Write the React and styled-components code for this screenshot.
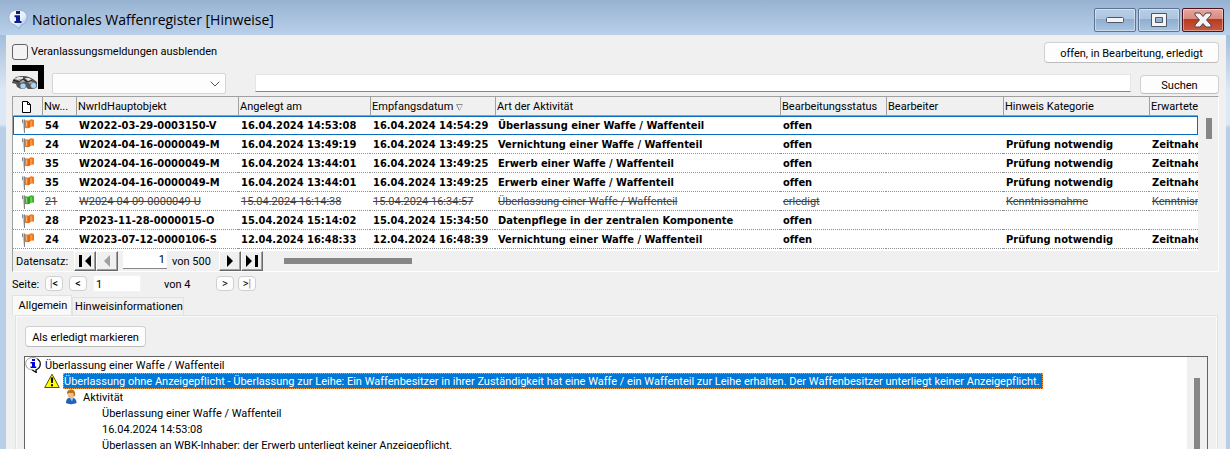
import styled, { createGlobalStyle } from 'styled-components'

const fonts = {
  ui: 'Roboto, "Noto Sans", sans-serif',
  title: '"Open Sans", "Noto Sans", sans-serif',
  bold: '"DejaVu Sans Condensed", "Noto Sans", sans-serif',
}

const GlobalStyle = createGlobalStyle`
  * {
    box-sizing: border-box;
  }

  html, body, #root {
    height: 100%;
  }

  body {
    margin: 0;
    overflow: hidden;
    font: 11px/16px ${fonts.ui};
    font-variant-ligatures: none;
    color: #000;
  }

  button, input, select {
    font: inherit;
    color: inherit;
    margin: 0;
  }
`

const Window = styled.div`
  display: flex;
  flex-direction: column;
  height: 100%;
  background: linear-gradient(#9ab5d3, #9fbad9 30px, #dce8f5 90px, #dce8f5 124px, #b9cfe8 128px);
`

const TitleBar = styled.header`
  display: flex;
  align-items: center;
  height: 35px;
  padding: 4px 6px 0 8px;
  background: linear-gradient(#97b2d1, #b9d0ea);
`

const WindowTitle = styled.h1`
  flex: 1;
  margin: 0 0 0 4px;
  font: 14px/20px ${fonts.title};
  font-variant-ligatures: none;
`

const WindowButtons = styled.div`
  display: flex;
  gap: 2px;
`

const WindowButton = styled.button`
  display: flex;
  align-items: center;
  justify-content: center;
  width: 42px;
  height: 24px;
  padding: 0;
  border: 1px solid ${(props) => (props.$close ? '#4a1420' : '#5d7391')};
  border-radius: 2px;
  box-shadow: inset 0 0 0 1px rgb(255 255 255 / 40%);
  background: ${(props) =>
    props.$close
      ? 'linear-gradient(#e6a79d, #d98a7c 45%, #b8391f 46%, #c75a41)'
      : 'linear-gradient(#b8cee6, #adc5e0 45%, #8fadcf 46%, #a9c4e2)'};
`

const Client = styled.main`
  flex: 1;
  display: flex;
  flex-direction: column;
  min-height: 0;
  margin: 0 4px 0 6px;
  padding: 7px 7px 0 6px;
  background: #f0f0f0;
`

const Toolbar = styled.div`
  display: flex;
  justify-content: space-between;
  height: 23px;
`

const CheckLabel = styled.label`
  display: flex;
  align-items: flex-start;
  gap: 3px;
  line-height: 20px;
`

const CheckBox = styled.input`
  appearance: none;
  width: 16px;
  height: 16px;
  margin-top: 2px;
  border: 1px solid #626262;
  border-radius: 3px;
  background: #f3f3f3;
`

const Button = styled.button`
  width: ${(props) => props.$width};
  height: ${(props) => props.$height || '21px'};
  padding: 2px 0 0;
  border: 1px solid #d0d0d0;
  border-bottom-color: #bcbcbc;
  border-radius: 4px;
  background: #fdfdfd;
  line-height: 16px;
`

const SearchRow = styled.div`
  display: flex;
  align-items: flex-end;
  height: 29px;
  margin-bottom: 2px;
`

const SearchIcon = styled.span`
  display: block;
  align-self: flex-start;
  height: 24px;
  margin-right: 8px;
`

const ComboBox = styled.span`
  display: flex;
  align-items: center;
  width: 174px;
  height: 21px;
  margin-right: 29px;
  padding-right: 5px;
  border: 1px solid #d6d6d6;
  border-radius: 2px;
  background: #fdfdfd;
`

const Select = styled.select`
  flex: 1;
  height: 19px;
  border: 0;
  appearance: none;
  background: none;
`

const SearchInput = styled.input`
  flex: 1;
  min-width: 0;
  height: 18px;
  margin: 0 9px 2px 0;
  border: 1px solid #e5e5e5;
  border-bottom-color: #868686;
  background: #fff;
`

const Grid = styled.section`
  border: 1px solid #fff;
  border-top-color: #a0a0a0;
  border-left-color: #a0a0a0;
`

const GridBody = styled.div`
  display: flex;
  height: 154px;
`

const TableArea = styled.div`
  flex: 1;
  min-width: 0;
  overflow: hidden;
  background: #fff;
`

const Table = styled.table`
  width: 100%;
  table-layout: fixed;
  border-collapse: separate;
  border-spacing: 0;
`

const HeadCell = styled.th`
  height: 19px;
  padding: 2px 0 0 ${(props) => (props.$first ? '8px' : '1px')};
  overflow: hidden;
  border-bottom: 1px solid #a0a0a0;
  border-left: 1px solid ${(props) => (props.$first ? '#f0f0f0' : '#a0a0a0')};
  background: #f0f0f0;
  font-weight: normal;
  line-height: 16px;
  text-align: left;
  white-space: nowrap;

  svg {
    vertical-align: middle;
  }
`

const Row = styled.tr`
  color: ${(props) => (props.$done ? '#444' : '#000')};
  font-family: ${(props) => (props.$done ? fonts.ui : fonts.bold)};
  font-weight: ${(props) => (props.$done ? 'normal' : 'bold')};
  text-decoration: ${(props) => (props.$done ? 'line-through' : 'none')};
  outline: ${(props) => (props.$selected ? '1px solid #0a6cc0' : 'none')};
  outline-offset: -1px;
`

const Cell = styled.td`
  height: 19px;
  padding: 1px 0 0 3px;
  overflow: hidden;
  border-bottom: 1px dotted #909090;
  line-height: 17px;
  white-space: nowrap;

  svg {
    display: block;
    margin-left: 4px;
  }
`

const GridScroll = styled.div`
  width: 20px;
  padding: 21px 0 0 8px;
`

const ScrollThumb = styled.div`
  width: ${(props) => props.$width};
  height: ${(props) => props.$height};
  background: #868686;
`

const Navigator = styled.div`
  display: flex;
  align-items: center;
  height: 20px;
  padding-left: 3px;
`

const NavButton = styled.button`
  display: flex;
  align-items: center;
  justify-content: center;
  width: 22px;
  height: 20px;
  padding: 0;
  border: 1px solid #fff;
  border-right-color: #696969;
  border-bottom-color: #696969;
  box-shadow: inset -1px -1px #a0a0a0;
  background: #f0f0f0;
`

const RecordInput = styled.input`
  width: 44px;
  height: 18px;
  margin: 0 5px 2px;
  padding: 0 2px;
  border: 0;
  border-bottom: 1px solid #868686;
  background: #fff;
  text-align: right;
`

const NavText = styled.span`
  width: ${(props) => props.$width};
  padding-top: 2px;
`

const Pager = styled.div`
  display: flex;
  align-items: center;
  height: 23px;
`

const PageButton = styled.button`
  width: 18px;
  height: 15px;
  margin-right: ${(props) => props.$gap};
  padding: 0;
  border: 1px solid #d0d0d0;
  border-radius: 4px;
  background: #fdfdfd;
  line-height: 12px;
`

const PageMark = styled.span`
  color: ${(props) => props.$color};
`

const PageInput = styled.input`
  width: 48px;
  height: 17px;
  margin-right: 23px;
  padding: 2px 2px 0;
  border: 1px solid #f3f3f3;
  background: #fff;
`

const Tabs = styled.div`
  display: flex;
  align-items: flex-end;
  height: 20px;
`

const Tab = styled.button`
  width: ${(props) => props.$width};
  height: ${(props) => (props.$active ? '20px' : '18px')};
  padding: 0 0 0 2px;
  border: 1px solid #e2e2e2;
  border-bottom: 0;
  background: ${(props) => (props.$active ? '#f9f9f9' : '#f1f1f1')};
  white-space: nowrap;
`

const TabPanel = styled.section`
  flex: 1;
  display: flex;
  flex-direction: column;
  min-height: 0;
  margin: 0 1px 0 3px;
  padding: 10px 9px 0 8px;
  border: 1px solid #e2e2e2;
  border-bottom: 0;
  box-shadow: inset 1px 1px #fafafa, inset -1px 0 #fafafa;
`

const Actions = styled.div`
  display: flex;
  padding-left: 1px;
`

const Tree = styled.div`
  flex: 1;
  display: flex;
  min-height: 0;
  margin-top: 9px;
  border: 1px solid #646464;
  border-bottom: 0;
  background: #fff;
`

const TreeItems = styled.ul`
  flex: 1;
  min-width: 0;
  margin: 0;
  padding: 0;
  overflow: hidden;
  list-style: none;
`

const TreeItem = styled.li`
  display: flex;
  align-items: center;
  height: 16px;
  padding-left: ${(props) => props.$level * 19}px;
  white-space: nowrap;
`

const TreeIcon = styled.span`
  width: 19px;
  height: 16px;
`

const TreeText = styled.span`
  height: 16px;
  line-height: 16px;
  padding-right: 2px;
  border: 1px dotted ${(props) => (props.$selected ? '#ff9a3c' : 'transparent')};
  background: ${(props) => (props.$selected ? '#0078d7' : 'none')};
  color: ${(props) => (props.$selected ? '#fff' : '#000')};
`

const TreeScroll = styled.div`
  width: 20px;
  padding: 21px 0 0 7px;
  background: #f0f0f0;
`

const InfoIcon = () => (
  <svg width='16' height='16' viewBox='0 0 16 16'>
    <path d='M8 .5c4.300 0 7.300 2.500 7.300 6.200 0 3.300-2 5.300-4.300 6l.3 2.800-4-2.600C3 12.500.7 10 .7 6.700.7 3 3.700.5 8 .5z' fill='#fff' stroke='#999' />
    <path d='M12.500 2c2 1.500 2.800 3 2.800 4.700 0 3.300-2 5.300-4.300 6l.3 2.800-4-2.600' fill='none' stroke='#111' strokeWidth='1.200' />
    <path d='M7 2h3v2H7zM5.500 5H10v4.500h1.300V11H5.500V9.500H7v-3H5.500z' fill='#0000d8' />
  </svg>
)

const TitleIcon = () => (
  <svg width='20' height='22' viewBox='0 0 20 22'>
    <defs>
      <linearGradient id='bubble' x1='0' y1='0' x2='1' y2='1'>
        <stop offset='0' stopColor='#fff' />
        <stop offset='.6' stopColor='#e4eefa' />
        <stop offset='1' stopColor='#6f9cd0' />
      </linearGradient>
    </defs>
    <path d='M10 1c5.500 0 9 3 9 7.500 0 4-2.500 6.500-5.500 7.300L11 20l-3.500-4C3.500 15.200 1 12.500 1 8.500 1 4 4.500 1 10 1z' fill='url(#bubble)' stroke='#6f93c2' strokeWidth='.5' />
    <path d='M8 2h4v3H8zM6.500 6.300H12V12h1.500v2h-7v-2H8V8.300H6.500z' fill='#0b1e90' />
  </svg>
)

const WarnIcon = () => (
  <svg width='16' height='16' viewBox='0 0 16 16'>
    <path d='M8 1.200L15.300 14.500H.7z' fill='#ffff00' stroke='#555500' strokeLinejoin='round' />
    <path d='M6.800 4.500h2.400L8.800 10H7.200zM7 11.300h2v2H7z' fill='#000' />
  </svg>
)

const UserIcon = () => (
  <svg width='16' height='16' viewBox='0 0 16 16'>
    <path d='M3 14c0-4 2-5.500 5-5.500s5.500 1.500 5.500 5.500c-3 1.500-8 1.500-10.500 0z' fill='#1f62b8' />
    <path d='M6.500 8.500h4l-1.500 4z' fill='#9cc8f4' />
    <ellipse cx='8' cy='5' rx='3.600' ry='4.300' fill='#f2bd84' />
    <path d='M4 5C3.500 2 6 .3 8.500.5c3 .3 4.300 2.800 3.500 6.500-1 .8-1.500-.5-1.700-3C8 4 5 3.500 4 5z' fill='#b8741e' />
  </svg>
)

const FlagIcon = ({ done }) => (
  <svg width='16' height='16' viewBox='0 0 16 16'>
    <path d='M2 1.500h3V15H4z' fill='#c4c4c4' />
    <path d='M2.500 1.500V5M4.500 1.500V15' stroke='#858585' />
    <path d='M5 2.500c2-1 3 .8 4.500-.5 1.500-1 2.500-.8 4.500 0V9c-2-.8-3-.6-4.500.5C8 11 7 9.500 5 10z' fill={done ? '#3fb52a' : '#f47a20'} />
    <path d='M6.500 3.500v5M11 3v5' stroke={done ? '#8ce06a' : '#ffb066'} />
    <path d='M9 3v7' stroke={done ? '#1f8418' : '#cc5510'} />
  </svg>
)

const PageIcon = () => (
  <svg width='9' height='12' viewBox='0 0 9 12'>
    <path d='M.5.500h5l3 3v8h-8zM5.500.5v3h3' fill='#fff' stroke='#000' />
  </svg>
)

const BinocularsIcon = () => (
  <svg width='32' height='24' viewBox='0 0 32 24'>
    <path d='M0 0h32v24h-6V6H0z' fill='#000' />
    <path d='M1 15l3-3 5-1 4 0 4 1 4 2 4 3 0 5-4 2h-5l-4-4-3 4-4-2-1-3-4-1z' fill='#555' />
    <path d='M2 14l4-2 5 0 0 2-5 1zM13 13l4 0 3 2-4 1z' fill='#e2e2e2' />
    <path d='M6 15l5-1 2 3-5 1zM15 17l4-1 3 2-4 1z' fill='#a5a5a5' />
    <path d='M1 15l6 2 4-3 5 3 4-2' stroke='#222' fill='none' />
    <ellipse cx='11' cy='21' rx='3' ry='2.800' fill='#a8d8f4' stroke='#667' strokeWidth='.6' />
    <ellipse cx='21.500' cy='20.500' rx='3' ry='3' fill='#a8d8f4' stroke='#667' strokeWidth='.6' />
  </svg>
)

const ChevronIcon = () => (
  <svg width='10' height='6' viewBox='0 0 10 6'>
    <path d='M.7.700L5 5 9.300.7' fill='none' stroke='#555' />
  </svg>
)

const ArrowIcon = ({ bar, flip, color = '#000' }) => (
  <svg width='14' height='12' viewBox='0 0 14 12' transform={flip ? 'scale(-1 1)' : undefined}>
    <path d={bar ? 'M1 0l6 6-6 6zM10 0h3v12h-3z' : 'M4 0l6 6-6 6z'} fill={color} />
  </svg>
)

const SortIcon = () => (
  <svg width='7' height='7' viewBox='0 0 7 7'>
    <path d='M6.500.500h-6L3.500 6.500' fill='none' stroke='#8a8a8a' />
    <path d='M3.500 6.500L6.500.5' stroke='#bbb' />
  </svg>
)

const columns = [
  { title: <PageIcon />, width: 29 },
  { title: 'Nw...', width: 34 },
  { title: 'NwrIdHauptobjekt', width: 162 },
  { title: 'Angelegt am', width: 132 },
  { title: <>Empfangsdatum <SortIcon /></>, width: 125 },
  { title: 'Art der Aktivität', width: 285 },
  { title: 'Bearbeitungsstatus', width: 106 },
  { title: 'Bearbeiter', width: 117 },
  { title: 'Hinweis Kategorie', width: 146 },
  { title: 'Erwartete', width: 'auto' },
]

const rows = [
  ['54', 'W2022-03-29-0003150-V', '16.04.2024 14:53:08', '16.04.2024 14:54:29', 'Überlassung einer Waffe / Waffenteil', 'offen', '', '', ''],
  ['24', 'W2024-04-16-0000049-M', '16.04.2024 13:49:19', '16.04.2024 13:49:25', 'Vernichtung einer Waffe / Waffenteil', 'offen', '', 'Prüfung notwendig', 'Zeitnahe'],
  ['35', 'W2024-04-16-0000049-M', '16.04.2024 13:44:01', '16.04.2024 13:49:25', 'Erwerb einer Waffe / Waffenteil', 'offen', '', 'Prüfung notwendig', 'Zeitnahe'],
  ['35', 'W2024-04-16-0000049-M', '16.04.2024 13:44:01', '16.04.2024 13:49:25', 'Erwerb einer Waffe / Waffenteil', 'offen', '', 'Prüfung notwendig', 'Zeitnahe'],
  ['21', 'W2024-04-09-0000049-U', '15.04.2024 16:14:38', '15.04.2024 16:34:57', 'Überlassung einer Waffe / Waffenteil', 'erledigt', '', 'Kenntnissnahme', 'Kenntnisn'],
  ['28', 'P2023-11-28-0000015-O', '15.04.2024 15:14:02', '15.04.2024 15:34:50', 'Datenpflege in der zentralen Komponente', 'offen', '', '', ''],
  ['24', 'W2023-07-12-0000106-S', '12.04.2024 16:48:33', '12.04.2024 16:48:39', 'Vernichtung einer Waffe / Waffenteil', 'offen', '', 'Prüfung notwendig', 'Zeitnahe'],
]

const tree = [
  { level: 0, icon: <InfoIcon />, text: 'Überlassung einer Waffe / Waffenteil' },
  {
    level: 1,
    icon: <WarnIcon />,
    text: 'Überlassung ohne Anzeigepflicht - Überlassung zur Leihe: Ein Waffenbesitzer in ihrer Zuständigkeit hat eine Waffe / ein Waffenteil zur Leihe erhalten. Der Waffenbesitzer unterliegt keiner Anzeigepflicht.',
    selected: true,
  },
  { level: 2, icon: <UserIcon />, text: 'Aktivität' },
  { level: 3, text: 'Überlassung einer Waffe / Waffenteil' },
  { level: 3, text: '16.04.2024 14:53:08' },
  { level: 3, text: 'Überlassen an WBK-Inhaber: der Erwerb unterliegt keiner Anzeigepflicht.' },
]

const App = () => (
  <Window>
    <GlobalStyle />

    <TitleBar>
      <TitleIcon />
      <WindowTitle>Nationales Waffenregister [Hinweise]</WindowTitle>

      <WindowButtons>
        <WindowButton aria-label='Minimieren'>
          <svg width='18' height='8'>
            <rect x='.5' y='1.500' width='17' height='5' rx='1' fill='#f4f4f4' stroke='#4b5568' />
          </svg>
        </WindowButton>
        <WindowButton aria-label='Maximieren'>
          <svg width='18' height='16'>
            <path d='M1.500 1.500h15v13h-15zM5.500 5.500h7v5h-7z' fill='#f4f4f4' fillRule='evenodd' stroke='#4b5568' />
          </svg>
        </WindowButton>
        <WindowButton $close aria-label='Schließen'>
          <svg width='18' height='16'>
            <path d='M1 1h5l3 3.500L12 1h5v2l-4.500 5L17 13v2h-5l-3-3.500L6 15H1v-2l4.500-5L1 3z' fill='#f4f4f4' stroke='#54414c' />
          </svg>
        </WindowButton>
      </WindowButtons>
    </TitleBar>

    <Client>
      <Toolbar>
        <CheckLabel>
          <CheckBox type='checkbox' />
          Veranlassungsmeldungen ausblenden
        </CheckLabel>
        <Button $width='175px'>offen, in Bearbeitung, erledigt</Button>
      </Toolbar>

      <SearchRow>
        <SearchIcon>
          <BinocularsIcon />
        </SearchIcon>
        <ComboBox>
          <Select aria-label='Suchfeld' />
          <ChevronIcon />
        </ComboBox>
        <SearchInput aria-label='Suchbegriff' />
        <Button $width='79px' $height='19px'>Suchen</Button>
      </SearchRow>

      <Grid>
        <GridBody>
          <TableArea>
            <Table>
              <colgroup>
                {columns.map((column, i) => (
                  <col key={i} style={{ width: column.width }} />
                ))}
              </colgroup>
              <thead>
                <tr>
                  {columns.map((column, i) => (
                    <HeadCell key={i} $first={i === 0}>{column.title}</HeadCell>
                  ))}
                </tr>
              </thead>
              <tbody>
                {rows.map((row, i) => {
                  const done = row[5] === 'erledigt'

                  return (
                    <Row key={i} $done={done} $selected={i === 0}>
                      <Cell><FlagIcon done={done} /></Cell>
                      {row.map((value, j) => (
                        <Cell key={j}>{value}</Cell>
                      ))}
                    </Row>
                  )
                })}
              </tbody>
            </Table>
          </TableArea>
          <GridScroll>
            <ScrollThumb $width='6px' $height='21px' />
          </GridScroll>
        </GridBody>

        <Navigator>
          <NavText $width='58px'>Datensatz:</NavText>
          <NavButton aria-label='Erster'><ArrowIcon bar flip /></NavButton>
          <NavButton aria-label='Zurück'><ArrowIcon flip color='#a0a0a0' /></NavButton>
          <RecordInput aria-label='Datensatz' defaultValue='1' />
          <NavText $width='47px'>von 500</NavText>
          <NavButton aria-label='Weiter'><ArrowIcon /></NavButton>
          <NavButton aria-label='Letzter'><ArrowIcon bar /></NavButton>
          <NavText $width='21px' />
          <ScrollThumb $width='128px' $height='6px' />
        </Navigator>
      </Grid>

      <Pager>
        <NavText $width='33px'>Seite:</NavText>
        <PageButton $gap='6px'><PageMark $color='#1a73c8'>|</PageMark>&lt;</PageButton>
        <PageButton $gap='6px'>&lt;</PageButton>
        <PageInput aria-label='Seite' defaultValue='1' />
        <NavText $width='52px'>von 4</NavText>
        <PageButton $gap='4px'>&gt;</PageButton>
        <PageButton $gap='0'>&gt;<PageMark $color='#d07818'>|</PageMark></PageButton>
      </Pager>

      <Tabs>
        <Tab $active $width='60px'>Allgemein</Tab>
        <Tab $width='112px'>Hinweisinformationen</Tab>
      </Tabs>

      <TabPanel>
        <Actions>
          <Button $width='121px'>Als erledigt markieren</Button>
        </Actions>
        <Tree>
          <TreeItems>
            {tree.map((item, i) => (
              <TreeItem key={i} $level={item.level}>
                <TreeIcon>{item.icon}</TreeIcon>
                <TreeText $selected={item.selected}>{item.text}</TreeText>
              </TreeItem>
            ))}
          </TreeItems>
          <TreeScroll>
            <ScrollThumb $width='6px' $height='100%' />
          </TreeScroll>
        </Tree>
      </TabPanel>
    </Client>
  </Window>
)

export default App
